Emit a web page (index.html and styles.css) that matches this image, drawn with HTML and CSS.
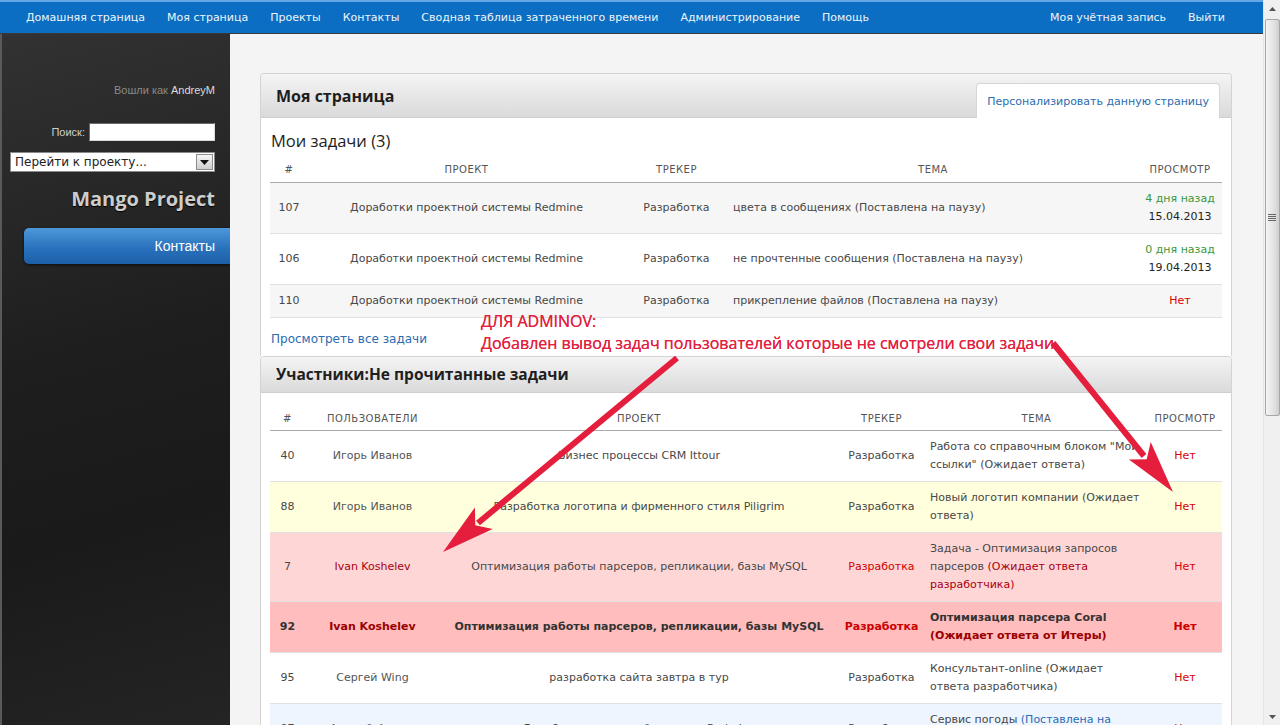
FILE: index.html
```html
<!DOCTYPE html>
<html lang="ru">
<head>
<meta charset="utf-8">
<title>Моя страница - Mango Project</title>
<link rel="stylesheet" href="styles.css">
</head>
<body>
<div class="viewport">
  <div class="page">
    <nav class="topnav">
      <ul class="menu">
        <li>Домашняя страница</li>
        <li>Моя страница</li>
        <li>Проекты</li>
        <li>Контакты</li>
        <li>Сводная таблица затраченного времени</li>
        <li>Администрирование</li>
        <li>Помощь</li>
      </ul>
      <ul class="menu">
        <li>Моя учётная запись</li>
        <li>Выйти</li>
      </ul>
    </nav>
    <div class="layout">
      <aside class="sidebar">
        <div class="loggedas">Вошли как <span class="user">AndreyM</span></div>
        <form class="search"><label>Поиск:</label><input type="text"></form>
        <div class="jump"><span>Перейти к проекту...</span><span class="drop"><svg width="9" height="5" viewBox="0 0 9 5"><path d="M0 0h9L4.5 5z" fill="#111"/></svg></span></div>
        <div class="brand">Mango Project</div>
        <a class="side-btn">Контакты</a>
      </aside>
      <main class="main">
        <section class="box first">
          <div class="box-head">
            <h2>Моя страница</h2>
            <a class="tab">Персонализировать данную страницу</a>
          </div>
          <div class="box-body">
            <h3>Мои задачи (3)</h3>
            <table class="list">
              <colgroup><col class="w38"><col class="w317"><col class="w103"><col class="w410"><col class="w84"></colgroup>
              <thead><tr><th>#</th><th>Проект</th><th>Трекер</th><th>Тема</th><th>Просмотр</th></tr></thead>
              <tbody>
                <tr class="odd"><td class="c">107</td><td class="c nw">Доработки проектной системы Redmine</td><td class="c">Разработка</td><td>цвета в сообщениях (Поставлена на паузу)</td><td class="c"><span class="green">4 дня назад</span><br><span class="date">15.04.2013</span></td></tr>
                <tr><td class="c">106</td><td class="c nw">Доработки проектной системы Redmine</td><td class="c">Разработка</td><td>не прочтенные сообщения (Поставлена на паузу)</td><td class="c"><span class="green">0 дня назад</span><br><span class="date">19.04.2013</span></td></tr>
                <tr class="odd"><td class="c">110</td><td class="c nw">Доработки проектной системы Redmine</td><td class="c">Разработка</td><td>прикрепление файлов (Поставлена на паузу)</td><td class="c no">Нет</td></tr>
              </tbody>
            </table>
            <a class="all-link">Просмотреть все задачи</a>
          </div>
        </section>
        <section class="box second">
          <div class="box-head short">
            <h2>Участники:Не прочитанные задачи</h2>
          </div>
          <div class="box-body">
            <table class="list t2">
              <colgroup><col class="w35"><col class="w135"><col class="w398"><col class="w87"><col class="w223"><col class="w74"></colgroup>
              <thead><tr><th>#</th><th>Пользователи</th><th>Проект</th><th>Трекер</th><th>Тема</th><th>Просмотр</th></tr></thead>
              <tbody>
                <tr><td class="c">40</td><td class="c name">Игорь Иванов</td><td class="c nw">Бизнес процессы CRM Ittour</td><td class="c">Разработка</td><td>Работа со справочным блоком "Мои<br>ссылки" (Ожидает ответа)</td><td class="c no">Нет</td></tr>
                <tr class="yellow"><td class="c">88</td><td class="c name">Игорь Иванов</td><td class="c nw">Разработка логотипа и фирменного стиля Piligrim</td><td class="c">Разработка</td><td>Новый логотип компании (Ожидает<br>ответа)</td><td class="c no">Нет</td></tr>
                <tr class="pink"><td class="c">7</td><td class="c dred">Ivan Koshelev</td><td class="c nw">Оптимизация работы парсеров, репликации, базы MySQL</td><td class="c red">Разработка</td><td>Задача - Оптимизация запросов<br>парсеров <span class="dred">(Ожидает ответа<br>разработчика)</span></td><td class="c no">Нет</td></tr>
                <tr class="hot"><td class="c">92</td><td class="c dred">Ivan Koshelev</td><td class="c nw">Оптимизация работы парсеров, репликации, базы MySQL</td><td class="c red">Разработка</td><td>Оптимизация парсера Coral<br><span class="dred">(Ожидает ответа от Итеры)</span></td><td class="c no">Нет</td></tr>
                <tr><td class="c">95</td><td class="c name">Сергей Wing</td><td class="c nw">разработка сайта завтра в тур</td><td class="c">Разработка</td><td>Консультант-online (Ожидает<br>ответа разработчика)</td><td class="c no">Нет</td></tr>
                <tr class="blue"><td class="c">97</td><td class="c name">Андрей Фомин</td><td class="c nw">Доработки проектной системы Redmine</td><td class="c">Разработка</td><td>Сервис погоды <span class="link">(Поставлена на<br>паузу)</span></td><td class="c no">Нет</td></tr>
              </tbody>
            </table>
          </div>
        </section>
      </main>
    </div>
  </div>
  <div class="scrollbar">
    <div class="sb-btn"><svg width="7" height="4" viewBox="0 0 7 4"><path d="M0 4L3.5 0L7 4z" fill="#555"/></svg></div>
    <div class="sb-thumb"><svg width="8" height="8" viewBox="0 0 8 8"><path d="M0 0.5h8M0 2.5h8M0 4.5h8M0 6.5h8" stroke="#666" stroke-width="1"/></svg></div>
    <div class="sb-space"></div>
    <div class="sb-btn"><svg width="7" height="4" viewBox="0 0 7 4"><path d="M0 0L3.5 4L7 0z" fill="#555"/></svg></div>
  </div>
  <div class="note">ДЛЯ ADMINOV:<br>Добавлен вывод задач пользователей которые не смотрели свои задачи</div>
  <svg class="arrows" width="1280" height="725" viewBox="0 0 1280 725">
    <line x1="677" y1="358" x2="478" y2="523" stroke="#e41e3c" stroke-width="6"/>
    <path d="M443 552L474.9 507.4L475.3 525.2L492.7 529Z" fill="#e41e3c"/>
    <line x1="1053" y1="343" x2="1144" y2="456" stroke="#e41e3c" stroke-width="6"/>
    <path d="M1173 492L1150.7 441.9L1146.7 459.3L1128.9 459.5Z" fill="#e41e3c"/>
  </svg>
</div>
</body>
</html>
```

FILE: styles.css
```css
* { box-sizing: border-box; }
html, body { margin: 0; padding: 0; height: 100%; overflow: hidden; }
body {
  font-family: "DejaVu Sans", Verdana, sans-serif;
  font-size: 11px;
  color: #484848;
  background: #f4f4f4;
}
.viewport {
  position: relative;
  display: flex;
  width: 1280px;
  height: 725px;
  overflow: hidden;
}
.page {
  flex: 0 0 1263px;
  display: flex;
  flex-direction: column;
  min-width: 0;
}

/* top navigation */
.topnav {
  flex: 0 0 34px;
  display: flex;
  justify-content: space-between;
  align-items: center;
  background: #0b6ec2;
  border-top: 2px solid #63a8e6;
  border-bottom: 1px solid #3a3a3a;
  padding: 0 27px 0 15px;
}
.menu {
  display: flex;
  list-style: none;
  margin: 0;
  padding: 0;
}
.menu li {
  padding: 0 11px;
  color: #eef4fb;
  font-size: 11px;
  white-space: nowrap;
}

.layout {
  flex: 1;
  display: flex;
  min-height: 0;
}

/* sidebar */
.sidebar {
  flex: 0 0 230px;
  background: linear-gradient(165deg, #323232 0%, #1e1e1e 45%, #1a1a1a 70%, #242424 100%);
  border-left: 2px solid #5a5a5a;
  padding: 49px 15px 0 8px;
  display: flex;
  flex-direction: column;
  align-items: flex-end;
}
.loggedas {
  font-family: "Liberation Sans", Arial, sans-serif;
  font-size: 11px;
  line-height: 14px;
  color: #8a8a8a;
}
.user { color: #dcdcdc; }
.search {
  display: flex;
  align-items: center;
  gap: 4px;
  margin: 26px 0 0;
}
.search label {
  font-family: "Liberation Sans", Arial, sans-serif;
  font-size: 11px;
  color: #cfcfcf;
}
.search input {
  width: 126px;
  height: 18px;
  margin: 0;
  padding: 0;
  border: 1px solid;
  border-color: #6a6a6a #dadada #dadada #6a6a6a;
  background: #fff;
}
.jump {
  align-self: stretch;
  margin-top: 11px;
  height: 20px;
  background: #fff;
  border: 1px solid #8a8a8a;
  display: flex;
  align-items: center;
  justify-content: space-between;
  padding: 0 1px 0 4px;
  font-size: 12px;
  color: #222;
}
.drop {
  width: 17px;
  height: 16px;
  border: 1px solid #8c8c8c;
  background: linear-gradient(#f6f6f6, #cdcdcd);
  display: flex;
  align-items: center;
  justify-content: center;
}
.brand {
  margin-top: 14px;
  font-family: "Open Sans", sans-serif;
  font-weight: 700;
  font-size: 20px;
  line-height: 26px;
  color: #cdcdcd;
  text-shadow: 0 1px 1px #000;
}
.side-btn {
  align-self: stretch;
  margin: 16px -15px 0 14px;
  height: 36px;
  border-radius: 5px 0 0 5px;
  background: linear-gradient(#4d98da, #2a72bd 55%, #1c5fa9);
  box-shadow: 0 1px 3px rgba(0, 0, 0, .7);
  display: flex;
  align-items: center;
  justify-content: flex-end;
  padding-right: 15px;
  color: #fff;
  font-family: "Liberation Sans", Arial, sans-serif;
  font-size: 14px;
}

/* main */
.main {
  flex: 1;
  min-width: 0;
  padding: 39px 31px 0 30px;
  background: #f4f4f4;
}
.box {
  background: #fff;
  border: 1px solid #d3d3d3;
  border-radius: 4px 4px 0 0;
}
.box.first { border-bottom: none; }
.box-head {
  height: 44px;
  display: flex;
  justify-content: space-between;
  padding: 0 11px 0 15px;
  background: linear-gradient(#f4f4f4, #dadada);
  border-bottom: 1px solid #cfcfcf;
  border-radius: 3px 3px 0 0;
}
.box-head.short { height: 36px; }
.box-head h2 {
  align-self: center;
  margin: 0;
  font-family: "Open Sans", sans-serif;
  font-weight: 700;
  font-size: 16px;
  color: #1e1e1e;
}
.box-head.short h2 { font-size: 15.5px; }
.tab {
  align-self: flex-end;
  height: 35px;
  margin-bottom: -1px;
  padding: 0 10px;
  background: #fff;
  border: 1px solid #d6d6d6;
  border-bottom: none;
  border-radius: 4px 4px 0 0;
  display: flex;
  align-items: center;
  color: #2a6cb0;
  font-size: 11px;
}
.box-body { padding: 0 9px 8px; }
.box-body h3 {
  margin: 13px 0 0 1px;
  font-family: "Open Sans", sans-serif;
  font-weight: 400;
  font-size: 16.5px;
  line-height: 20px;
  color: #1e1e1e;
}

/* tables */
table.list {
  width: 100%;
  border-collapse: collapse;
  table-layout: fixed;
  margin-top: 7px;
}
table.t2 { margin-top: 14px; }
.w35 { width: 35px; } .w38 { width: 38px; } .w74 { width: 74px; }
.w84 { width: 84px; } .w87 { width: 87px; } .w103 { width: 103px; }
.w135 { width: 135px; } .w223 { width: 223px; } .w317 { width: 317px; }
.w398 { width: 398px; } .w410 { width: 410px; }
table.list th {
  height: 24px;
  padding: 0 5px;
  font-weight: normal;
  font-size: 10px;
  letter-spacing: .5px;
  text-transform: uppercase;
  color: #555;
  text-align: center;
  border-bottom: 1px solid #a9a9a9;
}
table.list td {
  padding: 7px 5px;
  line-height: 18px;
  border-bottom: 1px solid #e0e0e0;
  vertical-align: middle;
}
tr.odd td { background: #f6f6f6; }
tr.yellow td { background: #ffffdd; }
tr.pink td { background: #ffd6d6; }
tr.hot td { background: #ffbdbd; font-weight: bold; color: #333; }
tr.blue td { background: #eef5ff; }
td.c { text-align: center; }
td.nw { white-space: nowrap; }
td.name { color: #555; }
.green { color: #3a983a; }
.date { color: #222; }
.no { color: #d80000; }
.red { color: #cc0000; }
.dred { color: #a8000f; }
tr.hot td.red, tr.hot td.no { color: #cc0000; }
tr.hot .dred { color: #9a0000; }
.link { color: #2a6cb0; }
.all-link {
  display: block;
  margin: 12px 0 0 1px;
  line-height: 18px;
  font-size: 12px;
  color: #2a6cb0;
}

/* fake scrollbar */
.scrollbar {
  flex: 0 0 17px;
  display: flex;
  flex-direction: column;
  align-items: center;
  background: #f0f0f0;
  border-left: 1px solid #e4e4e4;
}
.sb-btn {
  flex: 0 0 17px;
  width: 100%;
  display: flex;
  align-items: center;
  justify-content: center;
}
.sb-thumb {
  margin-top: 2px;
  width: 15px;
  height: 397px;
  border: 1px solid #a6a6a6;
  border-radius: 2px;
  background: linear-gradient(to right, #f4f4f4, #e2e2e2 60%, #cfcfcf);
  display: flex;
  align-items: center;
  justify-content: center;
}
.sb-space { flex: 1; }

/* annotation overlay */
.note {
  position: absolute;
  left: 481px;
  top: 310px;
  font-family: "Open Sans", sans-serif;
  font-size: 16px;
  line-height: 22px;
  color: #e3213f;
  white-space: nowrap;
  text-shadow: 0 0 .4px #e3213f;
}
.arrows {
  position: absolute;
  left: 0;
  top: 0;
  pointer-events: none;
}
```
